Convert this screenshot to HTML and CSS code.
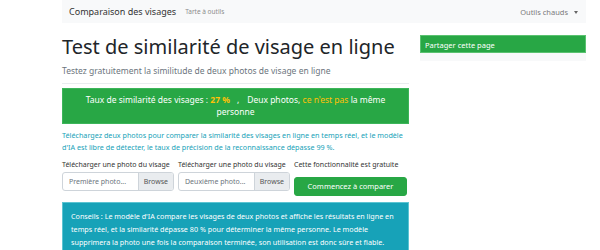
FILE: index.html
```html
<!DOCTYPE html>
<html lang="fr">
<head>
<meta charset="UTF-8" />
<meta name="viewport" content="width=device-width, initial-scale=1" />
<title>Comparaison des visages</title>
<link rel="stylesheet" href="styles.css">
</head>
<body>

<nav class="navbar">
  <a class="brand" href="#">Comparaison des visages</a>
  <a class="nav-link" href="#">Tarte à outils</a>
  <a class="nav-link dropdown" href="#">Outils chauds <span class="caret"></span></a>
</nav>

<div class="page">
  <div class="main">
    <h1>Test de similarité de visage en ligne</h1>
    <p class="lead">Testez gratuitement la similitude de deux photos de visage en ligne</p>

    <div class="result">
      Taux de similarité des visages : <b class="hl">27 %</b><span class="sep">,</span>Deux photos, <span class="hl">ce n'est pas</span> la même personne
    </div>

    <p class="intro">Téléchargez deux photos pour comparer la similarité des visages en ligne en temps réel, et le modèle d'IA est libre de détecter, le taux de précision de la reconnaissance dépasse 99 %.</p>

    <div class="upload-row">
      <div class="field">
        <label>Télécharger une photo du visage</label>
        <div class="file-input"><span class="file-name">Première photo...</span><span class="browse">Browse</span></div>
      </div>
      <div class="field">
        <label>Télécharger une photo du visage</label>
        <div class="file-input"><span class="file-name">Deuxième photo...</span><span class="browse">Browse</span></div>
      </div>
      <div class="field">
        <label>Cette fonctionnalité est gratuite</label>
        <button class="btn-compare" type="button">Commencez à comparer</button>
      </div>
    </div>

    <div class="tips">
      Conseils : Le modèle d'IA compare les visages de deux photos et affiche les résultats en ligne en temps réel, et la similarité dépasse 80 % pour déterminer la même personne. Le modèle supprimera la photo une fois la comparaison terminée, son utilisation est donc sûre et fiable.
    </div>
  </div>

  <aside class="side">
    <div class="share-head">Partager cette page</div>
    <div class="share-body"></div>
  </aside>
</div>

</body>
</html>
```

FILE: styles.css
```css
body {
  margin: 0;
  font-family: "Noto Sans", "Open Sans", sans-serif;
  color: #212529;
  background: #fff;
}
a { text-decoration: none; }

.navbar {
  margin: 0 14px 0 62px;
  height: 23px;
  background: #f8f9fa;
  display: flex;
  align-items: center;
  padding: 0 8px 0 7px;
}
.brand { font-size: 9px; color: #333; margin-right: 9px; }
.nav-link { font-size: 6.5px; color: #8c8c8c; }
.dropdown { margin-left: auto; font-size: 7.5px; color: #7a7a7a; }
.caret {
  display: inline-block;
  margin-left: 4px;
  vertical-align: 1px;
  border-top: 3px solid #666;
  border-left: 2.5px solid transparent;
  border-right: 2.5px solid transparent;
}

.page {
  margin: 0 14px 0 62px;
  display: grid;
  grid-template-columns: 347px 166px;
  gap: 11px;
}

h1 {
  font-size: 20px;
  font-weight: 400;
  margin: 11px 0 0;
  line-height: 26px;
  color: #212529;
}
.lead {
  font-size: 8.5px;
  color: #6c757d;
  margin: 5px 0 0;
  padding-bottom: 7px;
  border-bottom: 1px solid #e9ecef;
}

.result {
  margin-top: 4px;
  background: #28a745;
  border: 1px solid #3cb55a;
  color: #fff;
  font-size: 8.5px;
  line-height: 12px;
  text-align: center;
  padding: 5px 20px;
}
.hl { color: #ffc107; }
.sep { margin: 0 8px 0 7px; }

.intro {
  color: #17a2b8;
  font-size: 7.2px;
  line-height: 12px;
  margin: 5px 0 0;
}

.upload-row {
  display: grid;
  grid-template-columns: 112px 112px 113px;
  gap: 4px;
  margin-top: 7px;
}
.field label {
  display: block;
  font-size: 7px;
  color: #333;
  white-space: nowrap;
  margin-bottom: 3px;
}
.file-input {
  display: flex;
  height: 19px;
  border: 1px solid #ced4da;
  border-radius: 3px;
  box-sizing: border-box;
  font-size: 7px;
  color: #6c757d;
  overflow: hidden;
}
.file-name { flex: 1; padding: 0 6px; display: flex; align-items: center; }
.browse {
  background: #e9ecef;
  border-left: 1px solid #ced4da;
  padding: 0 5px;
  display: flex;
  align-items: center;
  color: #555;
}
.btn-compare {
  width: 100%;
  height: 19px;
  background: #28a745;
  border: 1px solid #28a745;
  border-radius: 3px;
  color: #fff;
  font-family: inherit;
  font-weight: 400;
  font-size: 7.5px;
  padding: 0;
}

.tips {
  margin-top: 6px;
  background: #17a2b8;
  border: 1px solid #5cc4d2;
  color: #fff;
  font-size: 7.2px;
  line-height: 13px;
  padding: 7px 8px 8px;
}

.side { padding-top: 12px; }
.share-head {
  background: #28a745;
  border: 1px solid #5ac270;
  color: #fff;
  font-size: 7.5px;
  padding: 4px 4px;
  height: 18px;
  box-sizing: border-box;
}
.share-body { height: 8px; background: #f8f9fa; }
```
